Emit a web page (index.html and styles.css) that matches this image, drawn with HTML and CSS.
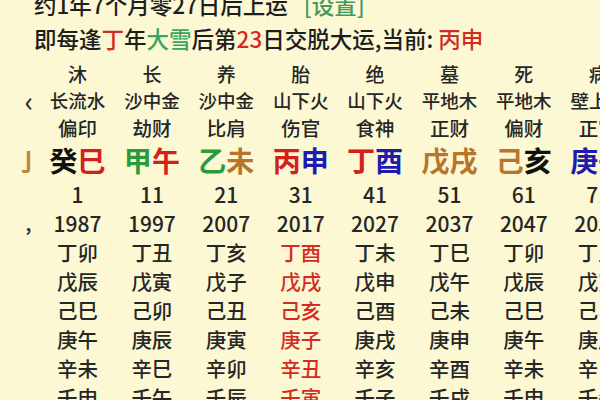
FILE: index.html
```html
<!DOCTYPE html>
<html lang="zh">
<head>
<meta charset="utf-8">
<link rel="stylesheet" href="styles.css">
</head>
<body>
<div class="page">
  <div class="head">
    <p class="line">约1年7个月零27日后上运<span class="set">[设置]</span></p>
    <p class="line">即每逢<span class="red">丁</span>年<span class="green">大雪</span>后第<span class="red">23</span>日交脱大运,当前: <span class="red">丙申</span></p>
  </div>
  <div class="table">
    <div class="row stage">
      <span class="edge"></span>
      <span>沐</span><span>长</span><span>养</span><span>胎</span><span>绝</span><span>墓</span><span>死</span><span>病</span>
    </div>
    <div class="row nayin">
      <span class="edge">‹</span>
      <span>长流水</span><span>沙中金</span><span>沙中金</span><span>山下火</span><span>山下火</span><span>平地木</span><span>平地木</span><span>壁上土</span>
    </div>
    <div class="row shen">
      <span class="edge"></span>
      <span>偏印</span><span>劫财</span><span>比肩</span><span>伤官</span><span>食神</span><span>正财</span><span>偏财</span><span>正官</span>
    </div>
    <div class="row gz">
      <span class="edge">亅</span>
      <span><b class="water">癸</b><b class="fire">巳</b></span>
      <span><b class="wood">甲</b><b class="fire">午</b></span>
      <span><b class="wood">乙</b><b class="earth">未</b></span>
      <span><b class="fire">丙</b><b class="metal">申</b></span>
      <span><b class="fire">丁</b><b class="metal">酉</b></span>
      <span><b class="earth">戊</b><b class="earth">戌</b></span>
      <span><b class="earth">己</b><b class="water">亥</b></span>
      <span><b class="metal">庚</b><b class="water">子</b></span>
    </div>
    <div class="row num">
      <span class="edge"></span>
      <span>1</span><span>11</span><span>21</span><span>31</span><span>41</span><span>51</span><span>61</span><span>71</span>
    </div>
    <div class="row num">
      <span class="edge">,</span>
      <span>1987</span><span>1997</span><span>2007</span><span>2017</span><span>2027</span><span>2037</span><span>2047</span><span>2057</span>
    </div>
    <div class="row ln">
      <span class="edge"></span>
      <span>丁卯</span><span>丁丑</span><span>丁亥</span><span class="cur">丁酉</span><span>丁未</span><span>丁巳</span><span>丁卯</span><span>丁丑</span>
    </div>
    <div class="row ln">
      <span class="edge"></span>
      <span>戊辰</span><span>戊寅</span><span>戊子</span><span class="cur">戊戌</span><span>戊申</span><span>戊午</span><span>戊辰</span><span>戊寅</span>
    </div>
    <div class="row ln">
      <span class="edge"></span>
      <span>己巳</span><span>己卯</span><span>己丑</span><span class="cur">己亥</span><span>己酉</span><span>己未</span><span>己巳</span><span>己卯</span>
    </div>
    <div class="row ln">
      <span class="edge"></span>
      <span>庚午</span><span>庚辰</span><span>庚寅</span><span class="cur">庚子</span><span>庚戌</span><span>庚申</span><span>庚午</span><span>庚辰</span>
    </div>
    <div class="row ln">
      <span class="edge"></span>
      <span>辛未</span><span>辛巳</span><span>辛卯</span><span class="cur">辛丑</span><span>辛亥</span><span>辛酉</span><span>辛未</span><span>辛巳</span>
    </div>
    <div class="row ln">
      <span class="edge"></span>
      <span>壬申</span><span>壬午</span><span>壬辰</span><span class="cur">壬寅</span><span>壬子</span><span>壬戌</span><span>壬申</span><span>壬午</span>
    </div>
  </div>
</div>
</body>
</html>
```

FILE: styles.css
```css
html, body {
  margin: 0;
  padding: 0;
  background: #fcf8d3;
}
body {
  width: 600px;
  height: 400px;
  overflow: hidden;
  font-family: "Noto Sans CJK SC", "Noto Sans", sans-serif;
  font-weight: 500;
  color: #1e1e1e;
}
.page {
  width: 600px;
  height: 400px;
  overflow: hidden;
}
.head {
  margin-top: -13px;
  padding-left: 34px;
}
.line {
  margin: 0;
  font-size: 22.5px;
  line-height: 34px;
  white-space: nowrap;
}
.set {
  color: #3f9a62;
  margin-left: 16px;
}
.red { color: #d42a24; }
.green { color: #3aa463; }
.table {
  margin-top: 5px;
}
.row {
  display: grid;
  grid-template-columns: 40.3px repeat(8, 74.4px);
  white-space: nowrap;
  text-align: center;
  color: #262626;
}
.row > span {
  display: block;
  text-align: center;
}
.row > .edge {
  text-align: right;
  padding-right: 8px;
  color: #333;
}
.stage { height: 27px; line-height: 27px; font-size: 19px; }
.nayin { height: 27px; line-height: 27px; font-size: 18.5px; }
.shen  { height: 27px; line-height: 27px; font-size: 19.5px; }
.gz    { height: 39px; line-height: 39px; font-size: 28px; }
.gz b  { font-weight: 700; }
.num   { height: 29px; line-height: 29px; font-size: 21px; }
.ln    { height: 29px; line-height: 29px; font-size: 20.5px; }
.ln .cur { color: #d42a24; }
.row.nayin > .edge { font-size: 28px; padding-right: 7px; }
.num .edge { font-weight: 700; font-size: 18px; padding-right: 9px; }
.row.gz > .edge {
  font-size: 24px;
  font-weight: 700;
  color: #c0823c;
  padding-right: 0;
}
.water { color: #111111; }
.fire  { color: #d4201c; }
.wood  { color: #2b9a3c; }
.earth { color: #b9742c; }
.metal { color: #1c1cb0; }
```
